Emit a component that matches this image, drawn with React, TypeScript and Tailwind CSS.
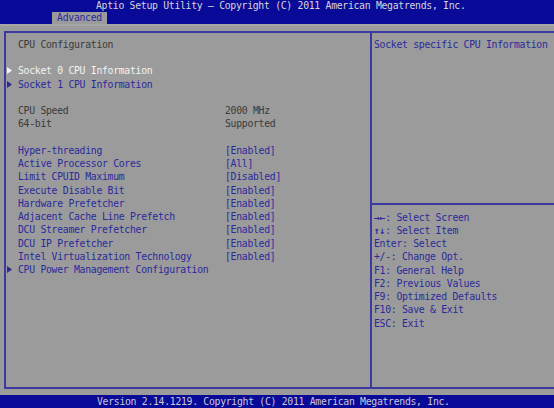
const mono = "font-['DejaVu_Sans_Mono','Liberation_Mono',monospace] text-[9.8px] tracking-[-0.3px]";

type Row =
  | { kind: "blank" }
  | { kind: "title"; label: string }
  | { kind: "menu"; label: string; selected?: boolean }
  | { kind: "info"; label: string; value: string }
  | { kind: "opt"; label: string; value: string };

const rows: Row[] = [
  { kind: "title", label: "CPU Configuration" },
  { kind: "blank" },
  { kind: "menu", label: "Socket 0 CPU Information", selected: true },
  { kind: "menu", label: "Socket 1 CPU Information" },
  { kind: "blank" },
  { kind: "info", label: "CPU Speed", value: "2000 MHz" },
  { kind: "info", label: "64-bit", value: "Supported" },
  { kind: "blank" },
  { kind: "opt", label: "Hyper-threading", value: "[Enabled]" },
  { kind: "opt", label: "Active Processor Cores", value: "[All]" },
  { kind: "opt", label: "Limit CPUID Maximum", value: "[Disabled]" },
  { kind: "opt", label: "Execute Disable Bit", value: "[Enabled]" },
  { kind: "opt", label: "Hardware Prefetcher", value: "[Enabled]" },
  { kind: "opt", label: "Adjacent Cache Line Prefetch", value: "[Enabled]" },
  { kind: "opt", label: "DCU Streamer Prefetcher", value: "[Enabled]" },
  { kind: "opt", label: "DCU IP Prefetcher", value: "[Enabled]" },
  { kind: "opt", label: "Intel Virtualization Technology", value: "[Enabled]" },
  { kind: "menu", label: "CPU Power Management Configuration" },
];

const help = [
  ["\u2192\u2190", "Select Screen", true],
  ["\u2191\u2193", "Select Item", true],
  ["Enter", "Select", false],
  ["+/-", "Change Opt.", false],
  ["F1", "General Help", false],
  ["F2", "Previous Values", false],
  ["F9", "Optimized Defaults", false],
  ["F10", "Save & Exit", false],
  ["ESC", "Exit", false],
] as const;

function Arrow({ white }: { white?: boolean }) {
  return (
    <svg width="5" height="7" viewBox="0 0 5 7" className="ml-[1px]">
      <polygon points="0,0 5,3.5 0,7" fill={white ? "#f4f4f4" : "#2a2a9c"} />
    </svg>
  );
}

function SetupRow({ row }: { row: Row }) {
  if (row.kind === "blank") return <div className="h-[13.25px]" />;
  const labelColor =
    row.kind === "title" || row.kind === "info"
      ? "text-[#3a3a3a]"
      : row.kind === "menu" && row.selected
        ? "text-[#f4f4f4]"
        : "text-[#2a2a9c]";
  return (
    <div className="flex h-[13.25px] items-center whitespace-pre leading-[13.25px]">
      <div className="flex w-[12px] items-center">
        {row.kind === "menu" ? <Arrow white={row.selected} /> : null}
      </div>
      <div className={`w-[207px] ${labelColor}`}>{row.label}</div>
      {"value" in row ? (
        <div className={row.kind === "info" ? "text-[#3a3a3a]" : "text-[#2a2a9c]"}>{row.value}</div>
      ) : null}
    </div>
  );
}

export default function App() {
  return (
    <div className={`flex h-[408px] w-[554px] flex-col overflow-hidden bg-[#9b9b9b] ${mono}`}>
      <div className="h-[24px] bg-[#0a0a98]">
        <div className="h-[12px] pl-[96px] leading-[11px] text-[#d6d6d6]">
          Aptio Setup Utility – Copyright (C) 2011 American Megatrends, Inc.
        </div>
        <div className="ml-[52px] h-[12px] w-[55px] bg-[#9b9b9b] text-center leading-[12px] text-[#2a2a9c]">
          Advanced
        </div>
      </div>

      <div className="h-[2px] bg-[#a6a6a6]" />

      <div className="ml-[4px] mt-[5px] flex h-[358px] border-y-2 border-l-2 border-[#3a3aa0]">
        <div className="w-[366px] border-r-2 border-[#3a3aa0] pt-[4.8px]">
          {rows.map((row, i) => (
            <SetupRow key={i} row={row} />
          ))}
        </div>

        <div className="flex flex-1 flex-col pt-[4.8px]">
          <div className="h-[13.25px] whitespace-pre pl-[2px] leading-[13.25px] text-[#2a2a9c]">
            Socket specific CPU Information
          </div>
          <div className="h-[151.6px]" />
          <div className="h-[2px] bg-[#3a3aa0]" />
          <div className="pl-[2px] pt-[6px]">
            {help.map(([key, text, bold]) => (
              <div key={text} className="h-[13.25px] whitespace-pre leading-[13.25px] text-[#2a2a9c]">
                <span className={bold ? "font-bold" : ""}>{key}</span>: {text}
              </div>
            ))}
          </div>
        </div>
      </div>

      <div className="flex-1" />

      <div className="h-[13px] bg-[#0a0a98] pl-[97px] leading-[13px] text-[#c8c8d6]">
        Version 2.14.1219. Copyright (C) 2011 American Megatrends, Inc.
      </div>
    </div>
  );
}
